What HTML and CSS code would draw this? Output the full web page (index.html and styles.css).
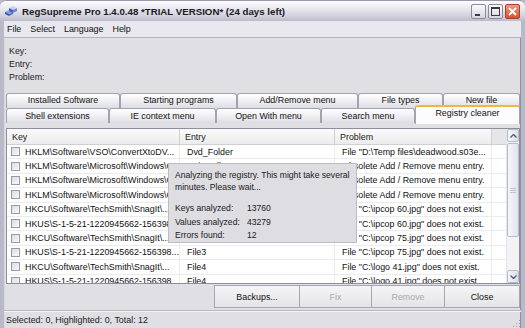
FILE: index.html
```html
<!DOCTYPE html>
<html lang="en">
<head>
  <meta charset="UTF-8" />
  <title>RegSupreme Pro</title>
  <link rel="stylesheet" href="styles.css">
</head>
<body>
  <div class="window">
    <div class="titlebar">
      <svg class="app-icon" width="14" height="12" viewBox="0 0 14 12">
        <path d="M1 7 L5 5 L9 7 L5 9 Z" fill="#8aa0e0"/>
        <path d="M1 7 L5 9 L5 11 L1 9 Z" fill="#3a4fa8"/>
        <path d="M5 9 L9 7 L9 9 L5 11 Z" fill="#5b6fc8"/>
        <path d="M5 3 L9 1 L13 3 L9 5 Z" fill="#c8d4f4"/>
        <path d="M5 3 L9 5 L9 8 L5 6 Z" fill="#4a5fb8"/>
        <path d="M9 5 L13 3 L13 6 L9 8 Z" fill="#7088d8"/>
      </svg>
      <span class="title">RegSupreme Pro 1.4.0.48 *TRIAL VERSION* (24 days left)</span>
      <div class="controls">
        <div class="ctl"><svg width="15" height="15" viewBox="0 0 15 15"><rect x="4" y="10" width="5" height="2" fill="#3a3a48"/></svg></div>
        <div class="ctl"><svg width="15" height="15" viewBox="0 0 15 15"><rect x="3.5" y="3.5" width="8" height="8" fill="none" stroke="#3a3a48"/><rect x="3" y="3" width="9" height="2" fill="#3a3a48"/></svg></div>
        <div class="ctl close"><svg width="15" height="15" viewBox="0 0 15 15"><path d="M4 4 L11 11 M11 4 L4 11" stroke="#fff" stroke-width="1.8"/></svg></div>
      </div>
    </div>
    <div class="menubar">
      <span>File</span><span>Select</span><span>Language</span><span>Help</span>
    </div>
    <div class="client">
      <div class="info">
        <div>Key:</div>
        <div>Entry:</div>
        <div>Problem:</div>
      </div>
      <div class="tabs">
        <div class="tab-row">
          <div class="tab w114">Installed Software</div>
          <div class="tab w117">Starting programs</div>
          <div class="tab w121">Add/Remove menu</div>
          <div class="tab w85">File types</div>
          <div class="tab w77">New file</div>
        </div>
        <div class="tab-row">
          <div class="tab w103">Shell extensions</div>
          <div class="tab w107">IE context menu</div>
          <div class="tab w105">Open With menu</div>
          <div class="tab w94">Search menu</div>
          <div class="tab active">Registry cleaner</div>
        </div>
      </div>
      <div class="list">
        <div class="list-body">
          <div class="list-head">
            <div class="hcell">Key</div>
            <div class="hcell">Entry</div>
            <div class="hcell">Problem</div>
            <div class="hcell"></div>
          </div>
          <div class="row"><div class="cell"><span class="check"></span>HKLM\Software\VSO\ConvertXtoDV...</div><div class="cell">Dvd_Folder</div><div class="cell">File "D:\Temp files\deadwood.s03e...</div></div>
          <div class="row"><div class="cell"><span class="check"></span>HKLM\Software\Microsoft\Windows\CurrentVersion</div><div class="cell">Uninstall</div><div class="cell">Obsolete Add / Remove menu entry.</div></div>
          <div class="row"><div class="cell"><span class="check"></span>HKLM\Software\Microsoft\Windows\CurrentVersion</div><div class="cell">Uninstall</div><div class="cell">Obsolete Add / Remove menu entry.</div></div>
          <div class="row"><div class="cell"><span class="check"></span>HKLM\Software\Microsoft\Windows\CurrentVersion</div><div class="cell">Uninstall</div><div class="cell">Obsolete Add / Remove menu entry.</div></div>
          <div class="row"><div class="cell"><span class="check"></span>HKCU\Software\TechSmith\SnagIt\...</div><div class="cell">File1</div><div class="cell">File "C:\ipcop 60.jpg" does not exist.</div></div>
          <div class="row"><div class="cell"><span class="check"></span>HKUS\S-1-5-21-1220945662-156398...</div><div class="cell">File1</div><div class="cell">File "C:\ipcop 60.jpg" does not exist.</div></div>
          <div class="row"><div class="cell"><span class="check"></span>HKCU\Software\TechSmith\SnagIt\...</div><div class="cell">File3</div><div class="cell">File "C:\ipcop 75.jpg" does not exist.</div></div>
          <div class="row"><div class="cell"><span class="check"></span>HKUS\S-1-5-21-1220945662-156398...</div><div class="cell">File3</div><div class="cell">File "C:\ipcop 75.jpg" does not exist.</div></div>
          <div class="row"><div class="cell"><span class="check"></span>HKCU\Software\TechSmith\SnagIt\...</div><div class="cell">File4</div><div class="cell">File "C:\logo 41.jpg" does not exist.</div></div>
          <div class="row"><div class="cell"><span class="check"></span>HKUS\S-1-5-21-1220945662-156398...</div><div class="cell">File4</div><div class="cell">File "C:\logo 41.jpg" does not exist.</div></div>
        </div>
        <div class="scrollbar">
          <div class="sb-btn"><svg width="7" height="4" viewBox="0 0 7 4"><path d="M0.5 3.5 L3.5 0.5 L6.5 3.5" fill="none" stroke="#4d6185" stroke-width="1.4"/></svg></div>
          <div class="sb-track">
            <div class="sb-thumb"><span></span><span></span><span></span></div>
          </div>
          <div class="sb-btn"><svg width="7" height="4" viewBox="0 0 7 4"><path d="M0.5 0.5 L3.5 3.5 L6.5 0.5" fill="none" stroke="#4d6185" stroke-width="1.4"/></svg></div>
        </div>
        <div class="progress-box">
          <p>Analyzing the registry. This might take several<br>minutes. Please wait...</p>
          <div class="stats">
            <span>Keys analyzed:</span><span>13760</span>
            <span>Values analyzed:</span><span>43279</span>
            <span>Errors found:</span><span>12</span>
          </div>
        </div>
      </div>
      <div class="buttons">
        <div class="spacer"></div>
        <div class="btn w86">Backups...</div>
        <div class="btn w72 disabled">Fix</div>
        <div class="btn w73 disabled">Remove</div>
        <div class="btn w75">Close</div>
      </div>
      <div class="status">
        <span>Selected: 0, Highlighted: 0, Total: 12</span>
        <svg class="grip" width="10" height="10" viewBox="0 0 10 10">
          <rect x="8" y="2" width="1" height="1" fill="#a0a0a8"/>
          <rect x="5" y="5" width="1" height="1" fill="#a0a0a8"/>
          <rect x="8" y="5" width="1" height="1" fill="#a0a0a8"/>
          <rect x="2" y="8" width="1" height="1" fill="#a0a0a8"/>
          <rect x="5" y="8" width="1" height="1" fill="#a0a0a8"/>
          <rect x="8" y="8" width="1" height="1" fill="#a0a0a8"/>
        </svg>
      </div>
    </div>
  </div>
</body>
</html>
```

FILE: styles.css
```css
html, body {
  margin: 0;
  padding: 0;
  background: #e0dfe3;
  overflow: hidden;
}
body {
  width: 525px;
  height: 328px;
  font-family: "Liberation Sans", Arial, sans-serif;
  font-size: 8.9px;
  color: #111;
}
.window {
  height: 328px;
  display: flex;
  flex-direction: column;
  box-sizing: border-box;
  border-left: 4px solid #b9b9c8;
  border-right: 4px solid #b9b9c8;
  box-shadow: inset 1px 0 0 #d8d8e2, inset -1px 0 0 #8f8fa2;
  background: #e0dfe3;
}
.titlebar {
  height: 21px;
  margin: 0 -4px;
  display: flex;
  align-items: center;
  padding: 0 5px 0 4px;
  background: linear-gradient(#fdfdfe 0%, #eaeaf0 35%, #d2d2de 75%, #babaca 100%);
  border-radius: 6px 6px 0 0;
  border-top: 1px solid #9a9aaa;
  box-sizing: border-box;
}
.app-icon {
  margin-right: 4px;
}
.title {
  font-weight: bold;
  font-size: 9.7px;
  color: #1a1a22;
  flex: 1;
  white-space: nowrap;
}
.controls {
  display: flex;
  gap: 2px;
}
.ctl {
  width: 15px;
  height: 15px;
  box-sizing: border-box;
  border: 1px solid #8a8a9c;
  border-radius: 2px;
  background: linear-gradient(#fafafc, #d6d6e0);
  display: flex;
}
.ctl svg {
  margin: -1px;
}
.ctl.close {
  background: linear-gradient(#f09a80, #d8502c);
  border-color: #b04028;
}
.menubar {
  height: 17px;
  display: flex;
  align-items: center;
  gap: 9px;
  padding-left: 3px;
  background: #e8e8ee;
  border-bottom: 1px solid #b4b4c0;
  box-sizing: border-box;
}
.client {
  flex: 1;
  display: flex;
  flex-direction: column;
  min-height: 0;
}
.info {
  height: 54px;
  padding: 7px 0 0 5px;
  box-sizing: border-box;
  line-height: 13px;
  color: #222;
}
.tabs {
  padding-left: 2px;
  height: 32px;
  display: flex;
  flex-direction: column;
  justify-content: flex-end;
  padding-bottom: 1px;
  box-sizing: border-box;
}
.tab-row {
  display: flex;
  height: 15px;
}
.tab {
  box-sizing: border-box;
  height: 15px;
  border: 1px solid #a3a3ae;
  border-bottom: none;
  border-radius: 3px 3px 0 0;
  background: linear-gradient(#ffffff, #ececf0 60%, #dcdce4);
  display: flex;
  align-items: center;
  justify-content: center;
  color: #111;
  white-space: nowrap;
}
.tab-row:first-child .tab {
  padding-bottom: 2px;
}
.tab.active {
  flex: 1;
  height: 19px;
  margin-top: -3px;
  background: #fcfcfe;
  border-top: 2px solid #f2b640;
  align-items: flex-start;
  padding-top: 1px;
  margin-right: 1px;
  position: relative;
  z-index: 1;
}
.w114 { width: 114px; }
.w117 { width: 117px; }
.w121 { width: 121px; }
.w85 { width: 85px; }
.w77 { width: 77px; }
.w103 { width: 103px; }
.w107 { width: 107px; }
.w105 { width: 105px; }
.w94 { width: 94px; }
.list {
  position: relative;
  margin: 4px 1px 0 2px;
  height: 156px;
  box-sizing: border-box;
  border: 1px solid #8d8d9c;
  background: #fff;
  display: flex;
  overflow: hidden;
}
.list-body {
  flex: 1;
  min-width: 0;
}
.list-head {
  display: grid;
  grid-template-columns: 173px 155px 157px 1fr;
  height: 16px;
  background: linear-gradient(#fbfbfb, #ececec);
  border-bottom: 1px solid #d0d0d0;
  box-sizing: border-box;
}
.hcell {
  display: flex;
  align-items: center;
  padding-left: 5px;
  border-right: 1px solid #cfcfcf;
  color: #222;
}
.hcell:last-child {
  border-right: none;
  background: #e6e6e8;
}
.row {
  display: grid;
  grid-template-columns: 173px 155px 157px 1fr;
  height: 14.4px;
  box-sizing: border-box;
  border-bottom: 1px solid #ececec;
}
.cell {
  display: flex;
  align-items: center;
  padding-left: 7px;
  white-space: nowrap;
  overflow: hidden;
  border-right: 1px solid #ececec;
  color: #111;
}
.cell:first-child {
  padding-left: 4px;
}
.check {
  flex: none;
  width: 9px;
  height: 9px;
  box-sizing: border-box;
  border: 1px solid #9a9aa6;
  background: linear-gradient(135deg, #dcdce2, #fafafa);
  margin-right: 5px;
}
.scrollbar {
  width: 12px;
  display: flex;
  flex-direction: column;
  background: #f3f3f6;
  border-left: 1px solid #e4e4ea;
}
.sb-btn {
  height: 13px;
  box-sizing: border-box;
  border: 1px solid #b6bccc;
  border-radius: 2px;
  background: linear-gradient(90deg, #f4f5f8, #dcdfe8);
  display: flex;
  align-items: center;
  justify-content: center;
}
.sb-track {
  flex: 1;
  padding-top: 1px;
}
.sb-thumb {
  height: 94px;
  box-sizing: border-box;
  border: 1px solid #b6bccc;
  border-radius: 2px;
  background: linear-gradient(90deg, #f6f6f9, #e2e4ec);
  display: flex;
  flex-direction: column;
  justify-content: center;
  align-items: center;
  gap: 1px;
}
.sb-thumb span {
  width: 6px;
  height: 1px;
  background: #c0c4d2;
}
.progress-box {
  position: absolute;
  left: 161px;
  top: 34px;
  width: 189px;
  height: 80px;
  box-sizing: border-box;
  background: #dedde2;
  border: 1px solid #bcbcc4;
  padding: 5px 0 0 6px;
  color: #1a1a1a;
  white-space: nowrap;
  font-size: 8.6px;
}
.progress-box p {
  margin: 0 0 9px 0;
  line-height: 12px;
}
.stats {
  display: grid;
  grid-template-columns: 72px 1fr;
  line-height: 13.5px;
}
.buttons {
  display: flex;
  height: 23px;
  margin-right: 1px;
  margin-top: 1px;
}
.spacer {
  flex: 1;
}
.btn {
  box-sizing: border-box;
  border: 1px solid #a7a7b0;
  background: linear-gradient(#f5f5f7, #e4e4e8);
  display: flex;
  align-items: center;
  justify-content: center;
  color: #111;
}
.btn + .btn {
  border-left: none;
}
.btn.disabled {
  color: #a9a9ae;
}
.w86 { width: 86px; }
.w72 { width: 72px; }
.w73 { width: 73px; }
.w75 { width: 75px; }
.status {
  flex: 1;
  margin-top: 2px;
  border-top: 1px solid #b8b8c0;
  box-shadow: inset 0 1px 0 #f4f4f6;
  display: flex;
  align-items: center;
  justify-content: space-between;
  padding: 0 0 0 2px;
  color: #222;
}
.grip {
  align-self: flex-end;
}
```
